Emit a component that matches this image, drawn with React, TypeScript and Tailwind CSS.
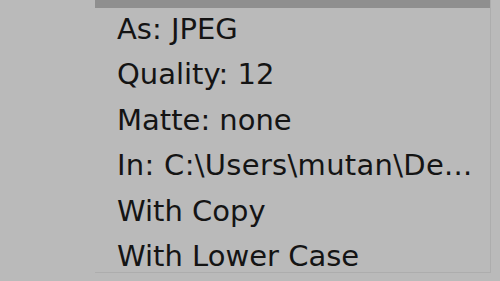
export default function App() {
  const lines = [
    "As: JPEG",
    "Quality: 12",
    "Matte: none",
    "In: C:\\Users\\mutan\\De...",
    "With Copy",
    "With Lower Case",
  ];
  return (
    <div className="w-[500px] h-[281px] bg-[#bababa] overflow-hidden">
      <div className="ml-[95px] w-[396px] h-[273px] border-r border-b border-[#adadad] flex flex-col">
        <div className="h-[8px] bg-[#8f8f8f] shrink-0" />
        <div
          className="flex flex-col pl-[22px] -mt-[1px] text-[29px] leading-[45.4px] text-[#141414]"
          style={{ fontFamily: '"DejaVu Sans", sans-serif' }}
        >
          {lines.map((l, i) => (
            <div key={l} className={i === 3 ? "whitespace-nowrap tracking-[0.3px]" : "whitespace-nowrap"}>{l}</div>
          ))}
        </div>
      </div>
    </div>
  );
}
